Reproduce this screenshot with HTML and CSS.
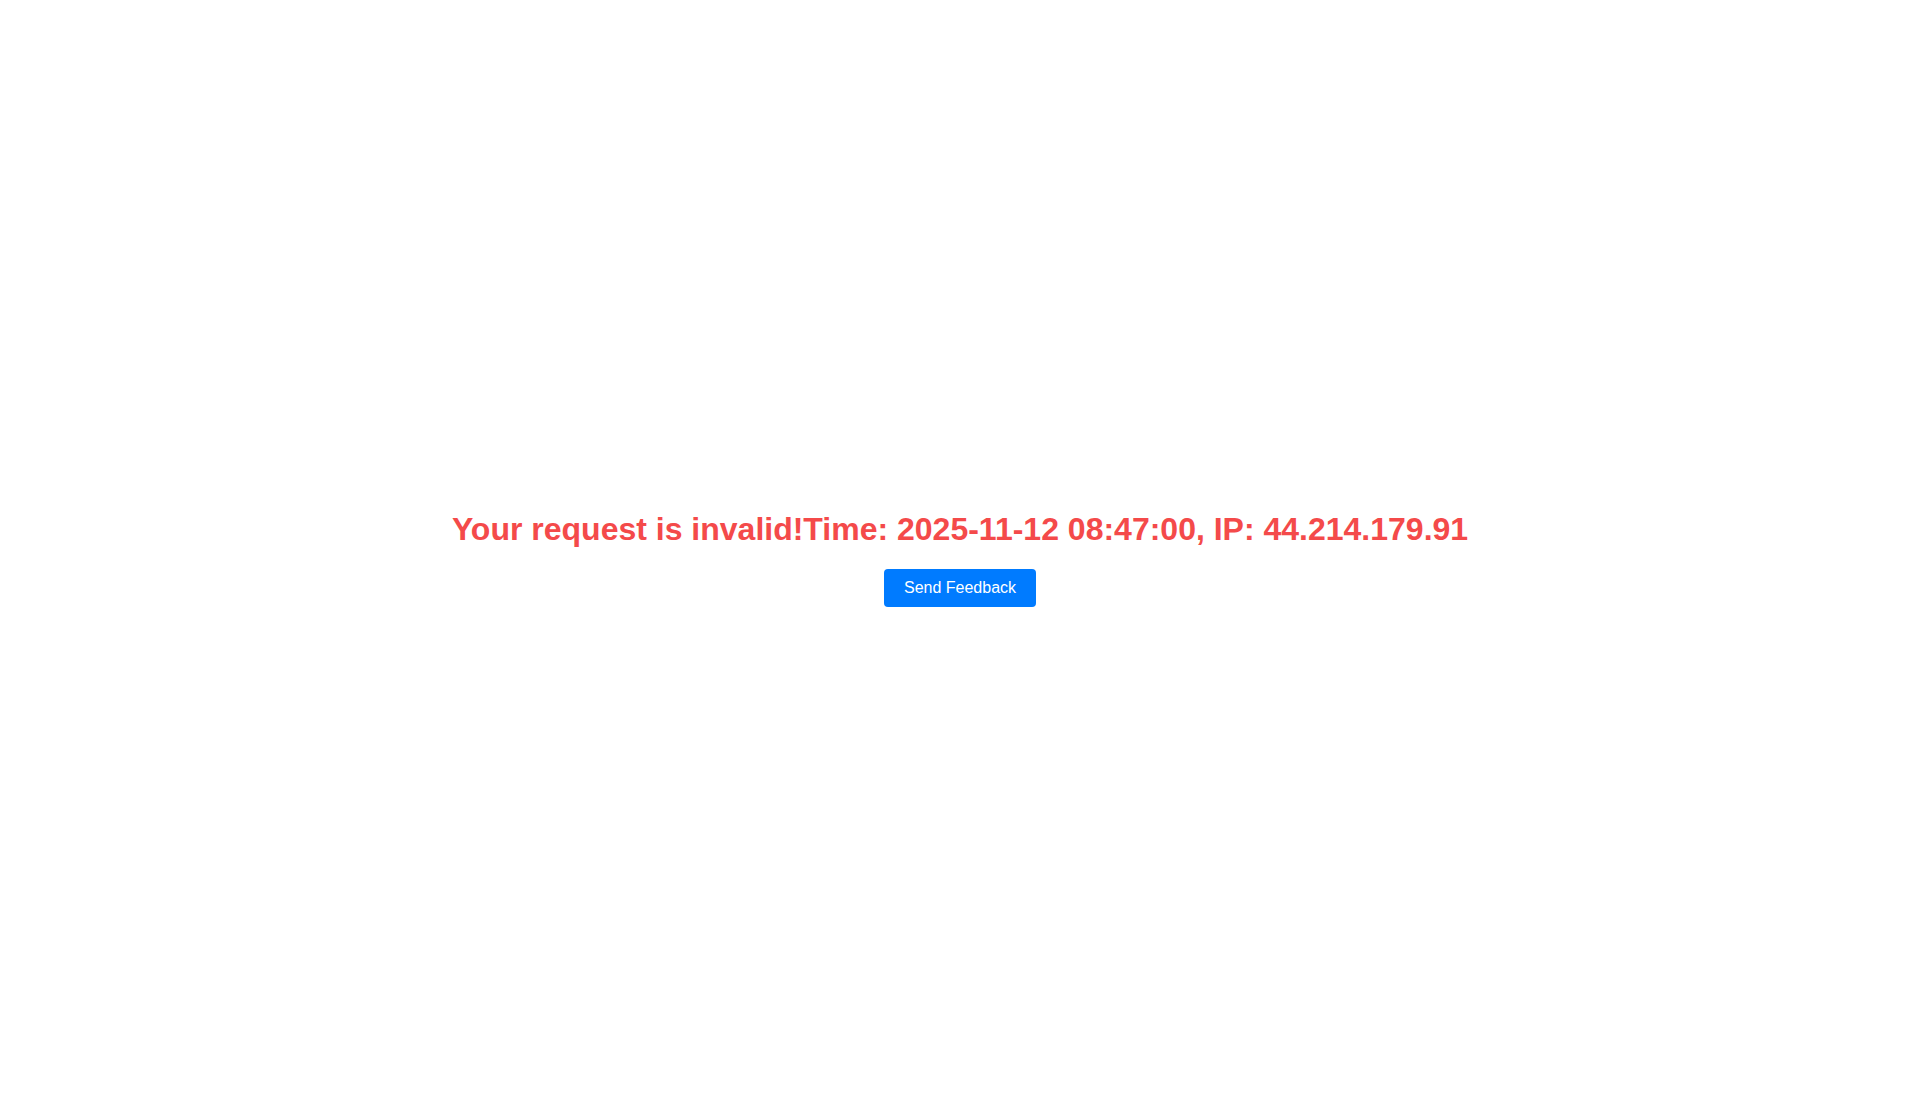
FILE: index.html
```html
<!DOCTYPE html>
<html lang="en">
<head>
<meta charset="utf-8">
<title>Invalid request</title>
<link rel="stylesheet" href="styles.css">
</head>
<body>
<main class="page">
  <div class="notice">
    <h1 class="message">Your request is invalid!Time: 2025-11-12 08:47:00, IP: 44.214.179.91</h1>
    <button class="feedback" type="button">Send Feedback</button>
  </div>
</main>
</body>
</html>
```

FILE: styles.css
```css
html, body {
  margin: 0;
  padding: 0;
  background: #ffffff;
  font-family: "Liberation Sans", Arial, sans-serif;
}
.page {
  min-height: 1096px;
  display: flex;
  align-items: center;
  justify-content: center;
  box-sizing: border-box;
  padding-top: 22px;
}
.notice {
  display: flex;
  flex-direction: column;
  align-items: center;
}
.message {
  margin: 0;
  font-size: 32px;
  font-weight: bold;
  line-height: 37px;
  color: #f44a4a;
  text-align: center;
}
.feedback {
  margin-top: 21px;
  padding: 10px 20px;
  font-family: "Liberation Sans", Arial, sans-serif;
  font-size: 16px;
  line-height: 18px;
  color: #ffffff;
  background: #007bff;
  border: none;
  border-radius: 4px;
  cursor: pointer;
}
```
